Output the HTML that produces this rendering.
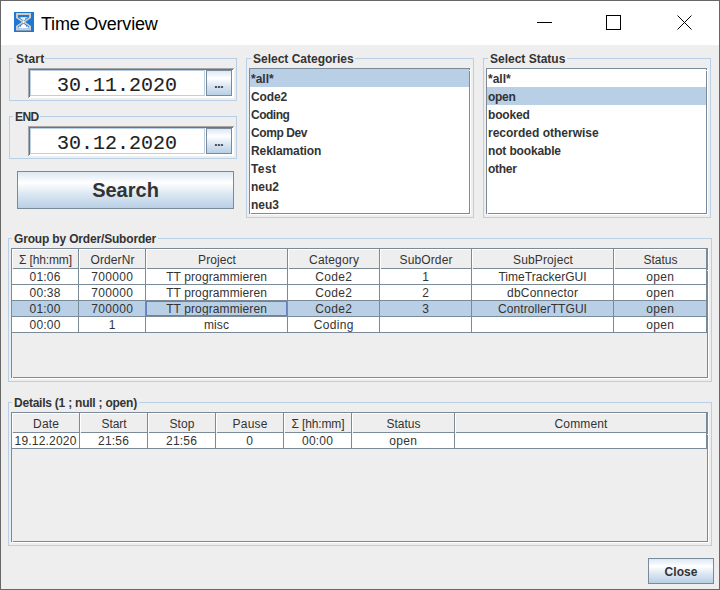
<!DOCTYPE html>
<html><head><meta charset="utf-8">
<style>
*{margin:0;padding:0;box-sizing:border-box}
html,body{width:720px;height:590px;overflow:hidden;background:#eeeeee}
body{position:relative;font-family:"Liberation Sans",sans-serif;color:#333}
.a{position:absolute}
.t{position:absolute;white-space:nowrap;font-family:"Liberation Sans",sans-serif}
.btn{position:absolute;border:1px solid #7a8a99;background:linear-gradient(to bottom,#dde8f3 0%,#ffffff 30%,#dde8f3 60%,#b8cfe5 100%)}
</style></head><body>
<div class="a" style="left:0px;top:0px;width:720px;height:45px;background:#ffffff;"></div>
<div class="a" style="left:0px;top:0px;width:720px;height:1px;background:#676767;"></div>
<div class="a" style="left:0px;top:0px;width:1px;height:590px;background:#676767;"></div>
<div class="a" style="left:719px;top:0px;width:1px;height:590px;background:#676767;"></div>
<div class="a" style="left:0px;top:589px;width:720px;height:1px;background:#676767;"></div>
<svg class="a" style="left:14px;top:12px" width="20" height="20" viewBox="0 0 20 20">
<rect x="0" y="0" width="20" height="20" fill="#1e78d2"/>
<path d="M2 1 H17 V6 L11.3 10 L17 14 V18.6 H2 V14 L7.7 10 L2 6 Z" fill="#d4cac4"/>
<path d="M4 3 H15 V5.4 L9.5 9.3 L4 5.4 Z" fill="#1e78d2"/>
<path d="M9.5 10.7 L15 14.6 V16.6 H4 V14.6 Z" fill="#1e78d2"/>
<path d="M5.2 5.2 H13.8 L9.8 8.6 H9.2 Z" fill="#ffffff"/>
<path d="M6 5.2 h1 v1 h-1z M11 6 h1 v1 h-1z M8.5 6.5 h1 v1 h-1z M12.5 5.2 h1 v1 h-1z" fill="#6aa6e0"/>
<path d="M9.1 8.5 H10 V11 H9.1 Z" fill="#ffffff"/>
<path d="M9.5 11.5 L12.5 14 L14.6 15 V16.6 H4.5 V15 L6.5 14 Z" fill="#ffffff"/>
<path d="M6 13.6 h1 v1 h-1z M12 13.6 h1 v1 h-1z" fill="#1e78d2"/>
</svg>
<div class="t" style="left:41px;top:14px;font-size:18px;font-weight:normal;line-height:21px;color:#000000;font-family:'Liberation Sans',sans-serif;letter-spacing:-0.22px">Time Overview</div>
<div class="a" style="left:537px;top:22px;width:15px;height:1px;background:#000000;"></div>
<div class="a" style="left:606px;top:15px;width:15px;height:15px;border:1px solid #000"></div>
<svg class="a" style="left:676px;top:14px" width="17" height="17" viewBox="0 0 17 17"><path d="M1.5 1.5 L15.5 15.5 M15.5 1.5 L1.5 15.5" stroke="#000" stroke-width="1" fill="none"/></svg>
<div class="a" style="left:9px;top:58px;width:1px;height:43px;background:#b8cfe5;"></div>
<div class="a" style="left:236px;top:58px;width:1px;height:43px;background:#b8cfe5;"></div>
<div class="a" style="left:9px;top:100px;width:228px;height:1px;background:#b8cfe5;"></div>
<div class="a" style="left:9px;top:58px;width:4px;height:1px;background:#b8cfe5;"></div>
<div class="a" style="left:45px;top:58px;width:192px;height:1px;background:#b8cfe5;"></div>
<div class="t" style="left:16px;top:52px;font-size:12px;font-weight:bold;line-height:14px;color:#333333;font-family:'Liberation Sans',sans-serif;letter-spacing:0.200px;">Start</div>
<div class="a" style="left:28px;top:68px;width:206px;height:30px;background:#ffffff;"></div>
<div class="a" style="left:28px;top:68px;width:206px;height:1px;background:#a6a6a6;"></div>
<div class="a" style="left:28px;top:68px;width:1px;height:30px;background:#a6a6a6;"></div>
<div class="a" style="left:29px;top:69px;width:204px;height:1px;background:#747474;"></div>
<div class="a" style="left:29px;top:69px;width:1px;height:28px;background:#747474;"></div>
<div class="a" style="left:30px;top:70px;width:175px;height:26px;border:1px solid #b8cfe5;background:#fff"></div>
<div class="t" style="left:57px;top:75px;font-size:20px;font-weight:normal;line-height:22px;color:#222222;font-family:'Liberation Mono',monospace;-webkit-text-stroke:0.1px #222">30.11.2020</div>
<div class="btn" style="left:206px;top:70px;width:26px;height:26px"></div>
<div class="t" style="left:206px;top:75px;width:26px;text-align:center;font-size:12px;font-weight:bold;line-height:18px;color:#333333;letter-spacing:-0.334px;text-indent:-0.334px;">...</div>
<div class="a" style="left:9px;top:116px;width:1px;height:43px;background:#b8cfe5;"></div>
<div class="a" style="left:236px;top:116px;width:1px;height:43px;background:#b8cfe5;"></div>
<div class="a" style="left:9px;top:158px;width:228px;height:1px;background:#b8cfe5;"></div>
<div class="a" style="left:9px;top:116px;width:4px;height:1px;background:#b8cfe5;"></div>
<div class="a" style="left:40px;top:116px;width:197px;height:1px;background:#b8cfe5;"></div>
<div class="t" style="left:15px;top:110px;font-size:12px;font-weight:bold;line-height:14px;color:#333333;font-family:'Liberation Sans',sans-serif;letter-spacing:-0.600px;">END</div>
<div class="a" style="left:28px;top:126px;width:206px;height:30px;background:#ffffff;"></div>
<div class="a" style="left:28px;top:126px;width:206px;height:1px;background:#a6a6a6;"></div>
<div class="a" style="left:28px;top:126px;width:1px;height:30px;background:#a6a6a6;"></div>
<div class="a" style="left:29px;top:127px;width:204px;height:1px;background:#747474;"></div>
<div class="a" style="left:29px;top:127px;width:1px;height:28px;background:#747474;"></div>
<div class="a" style="left:30px;top:128px;width:175px;height:26px;border:1px solid #b8cfe5;background:#fff"></div>
<div class="t" style="left:57px;top:133px;font-size:20px;font-weight:normal;line-height:22px;color:#222222;font-family:'Liberation Mono',monospace;-webkit-text-stroke:0.1px #222">30.12.2020</div>
<div class="btn" style="left:206px;top:128px;width:26px;height:26px"></div>
<div class="t" style="left:206px;top:133px;width:26px;text-align:center;font-size:12px;font-weight:bold;line-height:18px;color:#333333;letter-spacing:-0.334px;text-indent:-0.334px;">...</div>
<div class="btn" style="left:17px;top:171px;width:217px;height:38px"></div>
<div class="t" style="left:17px;top:177px;width:217px;text-align:center;font-size:20px;font-weight:bold;line-height:26px;color:#333333;">Search</div>
<div class="a" style="left:246px;top:58px;width:1px;height:160px;background:#b8cfe5;"></div>
<div class="a" style="left:473px;top:58px;width:1px;height:160px;background:#b8cfe5;"></div>
<div class="a" style="left:246px;top:217px;width:228px;height:1px;background:#b8cfe5;"></div>
<div class="a" style="left:246px;top:58px;width:5px;height:1px;background:#b8cfe5;"></div>
<div class="a" style="left:355px;top:58px;width:119px;height:1px;background:#b8cfe5;"></div>
<div class="t" style="left:253px;top:52px;font-size:12px;font-weight:bold;line-height:14px;color:#333333;font-family:'Liberation Sans',sans-serif;">Select Categories</div>
<div class="a" style="left:249px;top:68px;width:221px;height:146px;background:#ffffff;border:1px solid #7a8a99"></div>
<div class="a" style="left:470px;top:69px;width:1px;height:146px;background:#ffffff;"></div>
<div class="a" style="left:250px;top:214px;width:221px;height:1px;background:#ffffff;"></div>
<div class="a" style="left:469px;top:70px;width:1px;height:1px;background:#eeeeee;"></div>
<div class="a" style="left:250px;top:213px;width:1px;height:1px;background:#eeeeee;"></div>
<div class="a" style="left:250px;top:69px;width:219px;height:18px;background:#b8cfe5;"></div>
<div class="t" style="left:251px;top:71px;font-size:12px;font-weight:bold;line-height:16px;color:#333333;font-family:'Liberation Sans',sans-serif;">*all*</div>
<div class="t" style="left:251px;top:89px;font-size:12px;font-weight:bold;line-height:16px;color:#333333;font-family:'Liberation Sans',sans-serif;letter-spacing:-0.150px;">Code2</div>
<div class="t" style="left:251px;top:107px;font-size:12px;font-weight:bold;line-height:16px;color:#333333;font-family:'Liberation Sans',sans-serif;letter-spacing:-0.500px;">Coding</div>
<div class="t" style="left:251px;top:125px;font-size:12px;font-weight:bold;line-height:16px;color:#333333;font-family:'Liberation Sans',sans-serif;letter-spacing:-0.400px;">Comp Dev</div>
<div class="t" style="left:251px;top:143px;font-size:12px;font-weight:bold;line-height:16px;color:#333333;font-family:'Liberation Sans',sans-serif;letter-spacing:-0.100px;">Reklamation</div>
<div class="t" style="left:251px;top:161px;font-size:12px;font-weight:bold;line-height:16px;color:#333333;font-family:'Liberation Sans',sans-serif;letter-spacing:0.400px;">Test</div>
<div class="t" style="left:251px;top:179px;font-size:12px;font-weight:bold;line-height:16px;color:#333333;font-family:'Liberation Sans',sans-serif;">neu2</div>
<div class="t" style="left:251px;top:197px;font-size:12px;font-weight:bold;line-height:16px;color:#333333;font-family:'Liberation Sans',sans-serif;">neu3</div>
<div class="a" style="left:483px;top:58px;width:1px;height:160px;background:#b8cfe5;"></div>
<div class="a" style="left:710px;top:58px;width:1px;height:160px;background:#b8cfe5;"></div>
<div class="a" style="left:483px;top:217px;width:228px;height:1px;background:#b8cfe5;"></div>
<div class="a" style="left:483px;top:58px;width:5px;height:1px;background:#b8cfe5;"></div>
<div class="a" style="left:567px;top:58px;width:144px;height:1px;background:#b8cfe5;"></div>
<div class="t" style="left:490px;top:52px;font-size:12px;font-weight:bold;line-height:14px;color:#333333;font-family:'Liberation Sans',sans-serif;">Select Status</div>
<div class="a" style="left:486px;top:68px;width:221px;height:146px;background:#ffffff;border:1px solid #7a8a99"></div>
<div class="a" style="left:707px;top:69px;width:1px;height:146px;background:#ffffff;"></div>
<div class="a" style="left:487px;top:214px;width:221px;height:1px;background:#ffffff;"></div>
<div class="a" style="left:706px;top:70px;width:1px;height:1px;background:#eeeeee;"></div>
<div class="a" style="left:487px;top:213px;width:1px;height:1px;background:#eeeeee;"></div>
<div class="t" style="left:488px;top:71px;font-size:12px;font-weight:bold;line-height:16px;color:#333333;font-family:'Liberation Sans',sans-serif;">*all*</div>
<div class="a" style="left:487px;top:87px;width:219px;height:18px;background:#b8cfe5;"></div>
<div class="t" style="left:488px;top:89px;font-size:12px;font-weight:bold;line-height:16px;color:#333333;font-family:'Liberation Sans',sans-serif;letter-spacing:-0.300px;">open</div>
<div class="t" style="left:488px;top:107px;font-size:12px;font-weight:bold;line-height:16px;color:#333333;font-family:'Liberation Sans',sans-serif;letter-spacing:-0.180px;">booked</div>
<div class="t" style="left:488px;top:125px;font-size:12px;font-weight:bold;line-height:16px;color:#333333;font-family:'Liberation Sans',sans-serif;">recorded otherwise</div>
<div class="t" style="left:488px;top:143px;font-size:12px;font-weight:bold;line-height:16px;color:#333333;font-family:'Liberation Sans',sans-serif;letter-spacing:-0.150px;">not bookable</div>
<div class="t" style="left:488px;top:161px;font-size:12px;font-weight:bold;line-height:16px;color:#333333;font-family:'Liberation Sans',sans-serif;letter-spacing:-0.270px;">other</div>
<div class="a" style="left:8px;top:238px;width:1px;height:144px;background:#b8cfe5;"></div>
<div class="a" style="left:711px;top:238px;width:1px;height:144px;background:#b8cfe5;"></div>
<div class="a" style="left:8px;top:381px;width:704px;height:1px;background:#b8cfe5;"></div>
<div class="a" style="left:8px;top:238px;width:4px;height:1px;background:#b8cfe5;"></div>
<div class="a" style="left:158px;top:238px;width:554px;height:1px;background:#b8cfe5;"></div>
<div class="t" style="left:14px;top:232px;font-size:12px;font-weight:bold;line-height:14px;color:#333333;font-family:'Liberation Sans',sans-serif;letter-spacing:-0.170px;">Group by Order/Suborder</div>
<div class="a" style="left:11px;top:248px;width:697px;height:130px;background:#eeeeee;border:1px solid #7a8a99"></div>
<div class="a" style="left:708px;top:249px;width:1px;height:130px;background:#ffffff;"></div>
<div class="a" style="left:12px;top:378px;width:697px;height:1px;background:#ffffff;"></div>
<div class="a" style="left:12px;top:249px;width:67px;height:20px;background:#eeeeee;"></div>
<div class="a" style="left:12px;top:249px;width:66px;height:1px;background:#ffffff;"></div>
<div class="a" style="left:12px;top:249px;width:1px;height:19px;background:#ffffff;"></div>
<div class="a" style="left:78px;top:249px;width:1px;height:20px;background:#7a8a99;"></div>
<div class="a" style="left:13px;top:268px;width:66px;height:1px;background:#7a8a99;"></div>
<div class="t" style="left:12px;top:252px;width:67px;text-align:center;font-size:12px;font-weight:normal;line-height:16px;color:#333333;letter-spacing:-0.122px;text-indent:-0.122px;">&Sigma; [hh:mm]</div>
<div class="a" style="left:79px;top:249px;width:67px;height:20px;background:#eeeeee;"></div>
<div class="a" style="left:79px;top:249px;width:66px;height:1px;background:#ffffff;"></div>
<div class="a" style="left:79px;top:249px;width:1px;height:19px;background:#ffffff;"></div>
<div class="a" style="left:145px;top:249px;width:1px;height:20px;background:#7a8a99;"></div>
<div class="a" style="left:80px;top:268px;width:66px;height:1px;background:#7a8a99;"></div>
<div class="t" style="left:79px;top:252px;width:67px;text-align:center;font-size:12px;font-weight:normal;line-height:16px;color:#333333;letter-spacing:0.095px;text-indent:0.095px;">OrderNr</div>
<div class="a" style="left:146px;top:249px;width:142px;height:20px;background:#eeeeee;"></div>
<div class="a" style="left:146px;top:249px;width:141px;height:1px;background:#ffffff;"></div>
<div class="a" style="left:146px;top:249px;width:1px;height:19px;background:#ffffff;"></div>
<div class="a" style="left:287px;top:249px;width:1px;height:20px;background:#7a8a99;"></div>
<div class="a" style="left:147px;top:268px;width:141px;height:1px;background:#7a8a99;"></div>
<div class="t" style="left:146px;top:252px;width:142px;text-align:center;font-size:12px;font-weight:normal;line-height:16px;color:#333333;letter-spacing:0.093px;text-indent:0.093px;">Project</div>
<div class="a" style="left:288px;top:249px;width:92px;height:20px;background:#eeeeee;"></div>
<div class="a" style="left:288px;top:249px;width:91px;height:1px;background:#ffffff;"></div>
<div class="a" style="left:288px;top:249px;width:1px;height:19px;background:#ffffff;"></div>
<div class="a" style="left:379px;top:249px;width:1px;height:20px;background:#7a8a99;"></div>
<div class="a" style="left:289px;top:268px;width:91px;height:1px;background:#7a8a99;"></div>
<div class="t" style="left:288px;top:252px;width:92px;text-align:center;font-size:12px;font-weight:normal;line-height:16px;color:#333333;letter-spacing:0.164px;text-indent:0.164px;">Category</div>
<div class="a" style="left:380px;top:249px;width:92px;height:20px;background:#eeeeee;"></div>
<div class="a" style="left:380px;top:249px;width:91px;height:1px;background:#ffffff;"></div>
<div class="a" style="left:380px;top:249px;width:1px;height:19px;background:#ffffff;"></div>
<div class="a" style="left:471px;top:249px;width:1px;height:20px;background:#7a8a99;"></div>
<div class="a" style="left:381px;top:268px;width:91px;height:1px;background:#7a8a99;"></div>
<div class="t" style="left:380px;top:252px;width:92px;text-align:center;font-size:12px;font-weight:normal;line-height:16px;color:#333333;letter-spacing:0.122px;text-indent:0.122px;">SubOrder</div>
<div class="a" style="left:472px;top:249px;width:142px;height:20px;background:#eeeeee;"></div>
<div class="a" style="left:472px;top:249px;width:141px;height:1px;background:#ffffff;"></div>
<div class="a" style="left:472px;top:249px;width:1px;height:19px;background:#ffffff;"></div>
<div class="a" style="left:613px;top:249px;width:1px;height:20px;background:#7a8a99;"></div>
<div class="a" style="left:473px;top:268px;width:141px;height:1px;background:#7a8a99;"></div>
<div class="t" style="left:472px;top:252px;width:142px;text-align:center;font-size:12px;font-weight:normal;line-height:16px;color:#333333;letter-spacing:0.130px;text-indent:0.130px;">SubProject</div>
<div class="a" style="left:614px;top:249px;width:93px;height:20px;background:#eeeeee;"></div>
<div class="a" style="left:614px;top:249px;width:92px;height:1px;background:#ffffff;"></div>
<div class="a" style="left:614px;top:249px;width:1px;height:19px;background:#ffffff;"></div>
<div class="a" style="left:706px;top:249px;width:1px;height:20px;background:#7a8a99;"></div>
<div class="a" style="left:615px;top:268px;width:92px;height:1px;background:#7a8a99;"></div>
<div class="t" style="left:614px;top:252px;width:93px;text-align:center;font-size:12px;font-weight:normal;line-height:16px;color:#333333;letter-spacing:-0.003px;text-indent:-0.003px;">Status</div>
<div class="a" style="left:12px;top:269px;width:695px;height:15px;background:#ffffff;"></div>
<div class="a" style="left:12px;top:284px;width:695px;height:1px;background:#7a8a99;"></div>
<div class="a" style="left:78px;top:269px;width:1px;height:16px;background:#7a8a99;"></div>
<div class="t" style="left:12px;top:269px;width:66px;text-align:center;font-size:12px;font-weight:normal;line-height:16px;color:#333333;letter-spacing:0.194px;text-indent:0.194px;">01:06</div>
<div class="a" style="left:145px;top:269px;width:1px;height:16px;background:#7a8a99;"></div>
<div class="t" style="left:79px;top:269px;width:66px;text-align:center;font-size:12px;font-weight:normal;line-height:16px;color:#333333;letter-spacing:0.326px;text-indent:0.326px;">700000</div>
<div class="a" style="left:287px;top:269px;width:1px;height:16px;background:#7a8a99;"></div>
<div class="t" style="left:146px;top:269px;width:141px;text-align:center;font-size:12px;font-weight:normal;line-height:16px;color:#333333;letter-spacing:0.103px;text-indent:0.103px;">TT programmieren</div>
<div class="a" style="left:379px;top:269px;width:1px;height:16px;background:#7a8a99;"></div>
<div class="t" style="left:288px;top:269px;width:91px;text-align:center;font-size:12px;font-weight:normal;line-height:16px;color:#333333;letter-spacing:0.328px;text-indent:0.328px;">Code2</div>
<div class="a" style="left:471px;top:269px;width:1px;height:16px;background:#7a8a99;"></div>
<div class="t" style="left:380px;top:269px;width:91px;text-align:center;font-size:12px;font-weight:normal;line-height:16px;color:#333333;letter-spacing:0.326px;text-indent:0.326px;">1</div>
<div class="a" style="left:613px;top:269px;width:1px;height:16px;background:#7a8a99;"></div>
<div class="t" style="left:472px;top:269px;width:141px;text-align:center;font-size:12px;font-weight:normal;line-height:16px;color:#333333;letter-spacing:0.024px;text-indent:0.024px;">TimeTrackerGUI</div>
<div class="a" style="left:706px;top:269px;width:1px;height:16px;background:#7a8a99;"></div>
<div class="t" style="left:614px;top:269px;width:92px;text-align:center;font-size:12px;font-weight:normal;line-height:16px;color:#333333;letter-spacing:0.326px;text-indent:0.326px;">open</div>
<div class="a" style="left:12px;top:285px;width:695px;height:15px;background:#ffffff;"></div>
<div class="a" style="left:12px;top:300px;width:695px;height:1px;background:#7a8a99;"></div>
<div class="a" style="left:78px;top:285px;width:1px;height:16px;background:#7a8a99;"></div>
<div class="t" style="left:12px;top:285px;width:66px;text-align:center;font-size:12px;font-weight:normal;line-height:16px;color:#333333;letter-spacing:0.194px;text-indent:0.194px;">00:38</div>
<div class="a" style="left:145px;top:285px;width:1px;height:16px;background:#7a8a99;"></div>
<div class="t" style="left:79px;top:285px;width:66px;text-align:center;font-size:12px;font-weight:normal;line-height:16px;color:#333333;letter-spacing:0.326px;text-indent:0.326px;">700000</div>
<div class="a" style="left:287px;top:285px;width:1px;height:16px;background:#7a8a99;"></div>
<div class="t" style="left:146px;top:285px;width:141px;text-align:center;font-size:12px;font-weight:normal;line-height:16px;color:#333333;letter-spacing:0.103px;text-indent:0.103px;">TT programmieren</div>
<div class="a" style="left:379px;top:285px;width:1px;height:16px;background:#7a8a99;"></div>
<div class="t" style="left:288px;top:285px;width:91px;text-align:center;font-size:12px;font-weight:normal;line-height:16px;color:#333333;letter-spacing:0.328px;text-indent:0.328px;">Code2</div>
<div class="a" style="left:471px;top:285px;width:1px;height:16px;background:#7a8a99;"></div>
<div class="t" style="left:380px;top:285px;width:91px;text-align:center;font-size:12px;font-weight:normal;line-height:16px;color:#333333;letter-spacing:0.326px;text-indent:0.326px;">2</div>
<div class="a" style="left:613px;top:285px;width:1px;height:16px;background:#7a8a99;"></div>
<div class="t" style="left:472px;top:285px;width:141px;text-align:center;font-size:12px;font-weight:normal;line-height:16px;color:#333333;letter-spacing:0.208px;text-indent:0.208px;">dbConnector</div>
<div class="a" style="left:706px;top:285px;width:1px;height:16px;background:#7a8a99;"></div>
<div class="t" style="left:614px;top:285px;width:92px;text-align:center;font-size:12px;font-weight:normal;line-height:16px;color:#333333;letter-spacing:0.326px;text-indent:0.326px;">open</div>
<div class="a" style="left:12px;top:301px;width:695px;height:15px;background:#b8cfe5;"></div>
<div class="a" style="left:12px;top:316px;width:695px;height:1px;background:#7a8a99;"></div>
<div class="a" style="left:78px;top:301px;width:1px;height:16px;background:#7a8a99;"></div>
<div class="t" style="left:12px;top:301px;width:66px;text-align:center;font-size:12px;font-weight:normal;line-height:16px;color:#333333;letter-spacing:0.194px;text-indent:0.194px;">01:00</div>
<div class="a" style="left:145px;top:301px;width:1px;height:16px;background:#7a8a99;"></div>
<div class="t" style="left:79px;top:301px;width:66px;text-align:center;font-size:12px;font-weight:normal;line-height:16px;color:#333333;letter-spacing:0.326px;text-indent:0.326px;">700000</div>
<div class="a" style="left:287px;top:301px;width:1px;height:16px;background:#7a8a99;"></div>
<div class="t" style="left:146px;top:301px;width:141px;text-align:center;font-size:12px;font-weight:normal;line-height:16px;color:#333333;letter-spacing:0.103px;text-indent:0.103px;">TT programmieren</div>
<div class="a" style="left:379px;top:301px;width:1px;height:16px;background:#7a8a99;"></div>
<div class="t" style="left:288px;top:301px;width:91px;text-align:center;font-size:12px;font-weight:normal;line-height:16px;color:#333333;letter-spacing:0.328px;text-indent:0.328px;">Code2</div>
<div class="a" style="left:471px;top:301px;width:1px;height:16px;background:#7a8a99;"></div>
<div class="t" style="left:380px;top:301px;width:91px;text-align:center;font-size:12px;font-weight:normal;line-height:16px;color:#333333;letter-spacing:0.326px;text-indent:0.326px;">3</div>
<div class="a" style="left:613px;top:301px;width:1px;height:16px;background:#7a8a99;"></div>
<div class="t" style="left:472px;top:301px;width:141px;text-align:center;font-size:12px;font-weight:normal;line-height:16px;color:#333333;letter-spacing:0.066px;text-indent:0.066px;">ControllerTTGUI</div>
<div class="a" style="left:706px;top:301px;width:1px;height:16px;background:#7a8a99;"></div>
<div class="t" style="left:614px;top:301px;width:92px;text-align:center;font-size:12px;font-weight:normal;line-height:16px;color:#333333;letter-spacing:0.326px;text-indent:0.326px;">open</div>
<div class="a" style="left:12px;top:317px;width:695px;height:15px;background:#ffffff;"></div>
<div class="a" style="left:12px;top:332px;width:695px;height:1px;background:#7a8a99;"></div>
<div class="a" style="left:78px;top:317px;width:1px;height:16px;background:#7a8a99;"></div>
<div class="t" style="left:12px;top:317px;width:66px;text-align:center;font-size:12px;font-weight:normal;line-height:16px;color:#333333;letter-spacing:0.194px;text-indent:0.194px;">00:00</div>
<div class="a" style="left:145px;top:317px;width:1px;height:16px;background:#7a8a99;"></div>
<div class="t" style="left:79px;top:317px;width:66px;text-align:center;font-size:12px;font-weight:normal;line-height:16px;color:#333333;letter-spacing:0.326px;text-indent:0.326px;">1</div>
<div class="a" style="left:287px;top:317px;width:1px;height:16px;background:#7a8a99;"></div>
<div class="t" style="left:146px;top:317px;width:141px;text-align:center;font-size:12px;font-weight:normal;line-height:16px;color:#333333;letter-spacing:0.084px;text-indent:0.084px;">misc</div>
<div class="a" style="left:379px;top:317px;width:1px;height:16px;background:#7a8a99;"></div>
<div class="t" style="left:288px;top:317px;width:91px;text-align:center;font-size:12px;font-weight:normal;line-height:16px;color:#333333;letter-spacing:0.329px;text-indent:0.329px;">Coding</div>
<div class="a" style="left:471px;top:317px;width:1px;height:16px;background:#7a8a99;"></div>
<div class="a" style="left:613px;top:317px;width:1px;height:16px;background:#7a8a99;"></div>
<div class="a" style="left:706px;top:317px;width:1px;height:16px;background:#7a8a99;"></div>
<div class="t" style="left:614px;top:317px;width:92px;text-align:center;font-size:12px;font-weight:normal;line-height:16px;color:#333333;letter-spacing:0.326px;text-indent:0.326px;">open</div>
<div class="a" style="left:707px;top:270px;width:1px;height:1px;background:#eeeeee;"></div>
<div class="a" style="left:12px;top:377px;width:1px;height:1px;background:#eeeeee;"></div>
<div class="a" style="left:146px;top:301px;width:141px;height:15px;border:1px solid #6382bf"></div>
<div class="a" style="left:8px;top:402px;width:1px;height:144px;background:#b8cfe5;"></div>
<div class="a" style="left:711px;top:402px;width:1px;height:144px;background:#b8cfe5;"></div>
<div class="a" style="left:8px;top:545px;width:704px;height:1px;background:#b8cfe5;"></div>
<div class="a" style="left:8px;top:402px;width:4px;height:1px;background:#b8cfe5;"></div>
<div class="a" style="left:139px;top:402px;width:573px;height:1px;background:#b8cfe5;"></div>
<div class="t" style="left:14px;top:396px;font-size:12px;font-weight:bold;line-height:14px;color:#333333;font-family:'Liberation Sans',sans-serif;letter-spacing:-0.230px;">Details (1 ; null ; open)</div>
<div class="a" style="left:11px;top:412px;width:697px;height:130px;background:#eeeeee;border:1px solid #7a8a99"></div>
<div class="a" style="left:708px;top:413px;width:1px;height:130px;background:#ffffff;"></div>
<div class="a" style="left:12px;top:542px;width:697px;height:1px;background:#ffffff;"></div>
<div class="a" style="left:12px;top:413px;width:68px;height:20px;background:#eeeeee;"></div>
<div class="a" style="left:12px;top:413px;width:67px;height:1px;background:#ffffff;"></div>
<div class="a" style="left:12px;top:413px;width:1px;height:19px;background:#ffffff;"></div>
<div class="a" style="left:79px;top:413px;width:1px;height:20px;background:#7a8a99;"></div>
<div class="a" style="left:13px;top:432px;width:67px;height:1px;background:#7a8a99;"></div>
<div class="t" style="left:12px;top:416px;width:68px;text-align:center;font-size:12px;font-weight:normal;line-height:16px;color:#333333;letter-spacing:0.163px;text-indent:0.163px;">Date</div>
<div class="a" style="left:80px;top:413px;width:68px;height:20px;background:#eeeeee;"></div>
<div class="a" style="left:80px;top:413px;width:67px;height:1px;background:#ffffff;"></div>
<div class="a" style="left:80px;top:413px;width:1px;height:19px;background:#ffffff;"></div>
<div class="a" style="left:147px;top:413px;width:1px;height:20px;background:#7a8a99;"></div>
<div class="a" style="left:81px;top:432px;width:67px;height:1px;background:#7a8a99;"></div>
<div class="t" style="left:80px;top:416px;width:68px;text-align:center;font-size:12px;font-weight:normal;line-height:16px;color:#333333;letter-spacing:-0.068px;text-indent:-0.068px;">Start</div>
<div class="a" style="left:148px;top:413px;width:68px;height:20px;background:#eeeeee;"></div>
<div class="a" style="left:148px;top:413px;width:67px;height:1px;background:#ffffff;"></div>
<div class="a" style="left:148px;top:413px;width:1px;height:19px;background:#ffffff;"></div>
<div class="a" style="left:215px;top:413px;width:1px;height:20px;background:#7a8a99;"></div>
<div class="a" style="left:149px;top:432px;width:67px;height:1px;background:#7a8a99;"></div>
<div class="t" style="left:148px;top:416px;width:68px;text-align:center;font-size:12px;font-weight:normal;line-height:16px;color:#333333;letter-spacing:0.079px;text-indent:0.079px;">Stop</div>
<div class="a" style="left:216px;top:413px;width:68px;height:20px;background:#eeeeee;"></div>
<div class="a" style="left:216px;top:413px;width:67px;height:1px;background:#ffffff;"></div>
<div class="a" style="left:216px;top:413px;width:1px;height:19px;background:#ffffff;"></div>
<div class="a" style="left:283px;top:413px;width:1px;height:20px;background:#7a8a99;"></div>
<div class="a" style="left:217px;top:432px;width:67px;height:1px;background:#7a8a99;"></div>
<div class="t" style="left:216px;top:416px;width:68px;text-align:center;font-size:12px;font-weight:normal;line-height:16px;color:#333333;letter-spacing:0.195px;text-indent:0.195px;">Pause</div>
<div class="a" style="left:284px;top:413px;width:68px;height:20px;background:#eeeeee;"></div>
<div class="a" style="left:284px;top:413px;width:67px;height:1px;background:#ffffff;"></div>
<div class="a" style="left:284px;top:413px;width:1px;height:19px;background:#ffffff;"></div>
<div class="a" style="left:351px;top:413px;width:1px;height:20px;background:#7a8a99;"></div>
<div class="a" style="left:285px;top:432px;width:67px;height:1px;background:#7a8a99;"></div>
<div class="t" style="left:284px;top:416px;width:68px;text-align:center;font-size:12px;font-weight:normal;line-height:16px;color:#333333;letter-spacing:-0.122px;text-indent:-0.122px;">&Sigma; [hh:mm]</div>
<div class="a" style="left:352px;top:413px;width:103px;height:20px;background:#eeeeee;"></div>
<div class="a" style="left:352px;top:413px;width:102px;height:1px;background:#ffffff;"></div>
<div class="a" style="left:352px;top:413px;width:1px;height:19px;background:#ffffff;"></div>
<div class="a" style="left:454px;top:413px;width:1px;height:20px;background:#7a8a99;"></div>
<div class="a" style="left:353px;top:432px;width:102px;height:1px;background:#7a8a99;"></div>
<div class="t" style="left:352px;top:416px;width:103px;text-align:center;font-size:12px;font-weight:normal;line-height:16px;color:#333333;letter-spacing:-0.003px;text-indent:-0.003px;">Status</div>
<div class="a" style="left:455px;top:413px;width:252px;height:20px;background:#eeeeee;"></div>
<div class="a" style="left:455px;top:413px;width:251px;height:1px;background:#ffffff;"></div>
<div class="a" style="left:455px;top:413px;width:1px;height:19px;background:#ffffff;"></div>
<div class="a" style="left:706px;top:413px;width:1px;height:20px;background:#7a8a99;"></div>
<div class="a" style="left:456px;top:432px;width:251px;height:1px;background:#7a8a99;"></div>
<div class="t" style="left:455px;top:416px;width:252px;text-align:center;font-size:12px;font-weight:normal;line-height:16px;color:#333333;letter-spacing:0.141px;text-indent:0.141px;">Comment</div>
<div class="a" style="left:12px;top:433px;width:695px;height:15px;background:#ffffff;"></div>
<div class="a" style="left:12px;top:448px;width:695px;height:1px;background:#7a8a99;"></div>
<div class="a" style="left:79px;top:433px;width:1px;height:16px;background:#7a8a99;"></div>
<div class="t" style="left:12px;top:433px;width:67px;text-align:center;font-size:12px;font-weight:normal;line-height:16px;color:#333333;letter-spacing:0.194px;text-indent:0.194px;">19.12.2020</div>
<div class="a" style="left:147px;top:433px;width:1px;height:16px;background:#7a8a99;"></div>
<div class="t" style="left:80px;top:433px;width:67px;text-align:center;font-size:12px;font-weight:normal;line-height:16px;color:#333333;letter-spacing:0.194px;text-indent:0.194px;">21:56</div>
<div class="a" style="left:215px;top:433px;width:1px;height:16px;background:#7a8a99;"></div>
<div class="t" style="left:148px;top:433px;width:67px;text-align:center;font-size:12px;font-weight:normal;line-height:16px;color:#333333;letter-spacing:0.194px;text-indent:0.194px;">21:56</div>
<div class="a" style="left:283px;top:433px;width:1px;height:16px;background:#7a8a99;"></div>
<div class="t" style="left:216px;top:433px;width:67px;text-align:center;font-size:12px;font-weight:normal;line-height:16px;color:#333333;letter-spacing:0.326px;text-indent:0.326px;">0</div>
<div class="a" style="left:351px;top:433px;width:1px;height:16px;background:#7a8a99;"></div>
<div class="t" style="left:284px;top:433px;width:67px;text-align:center;font-size:12px;font-weight:normal;line-height:16px;color:#333333;letter-spacing:0.194px;text-indent:0.194px;">00:00</div>
<div class="a" style="left:454px;top:433px;width:1px;height:16px;background:#7a8a99;"></div>
<div class="t" style="left:352px;top:433px;width:102px;text-align:center;font-size:12px;font-weight:normal;line-height:16px;color:#333333;letter-spacing:0.326px;text-indent:0.326px;">open</div>
<div class="a" style="left:706px;top:433px;width:1px;height:16px;background:#7a8a99;"></div>
<div class="a" style="left:707px;top:434px;width:1px;height:1px;background:#eeeeee;"></div>
<div class="a" style="left:12px;top:541px;width:1px;height:1px;background:#eeeeee;"></div>
<div class="btn" style="left:648px;top:558px;width:66px;height:26px"></div>
<div class="t" style="left:648px;top:563px;width:66px;text-align:center;font-size:12px;font-weight:bold;line-height:18px;color:#333333;letter-spacing:0.064px;text-indent:0.064px;">Close</div>
</body></html>
